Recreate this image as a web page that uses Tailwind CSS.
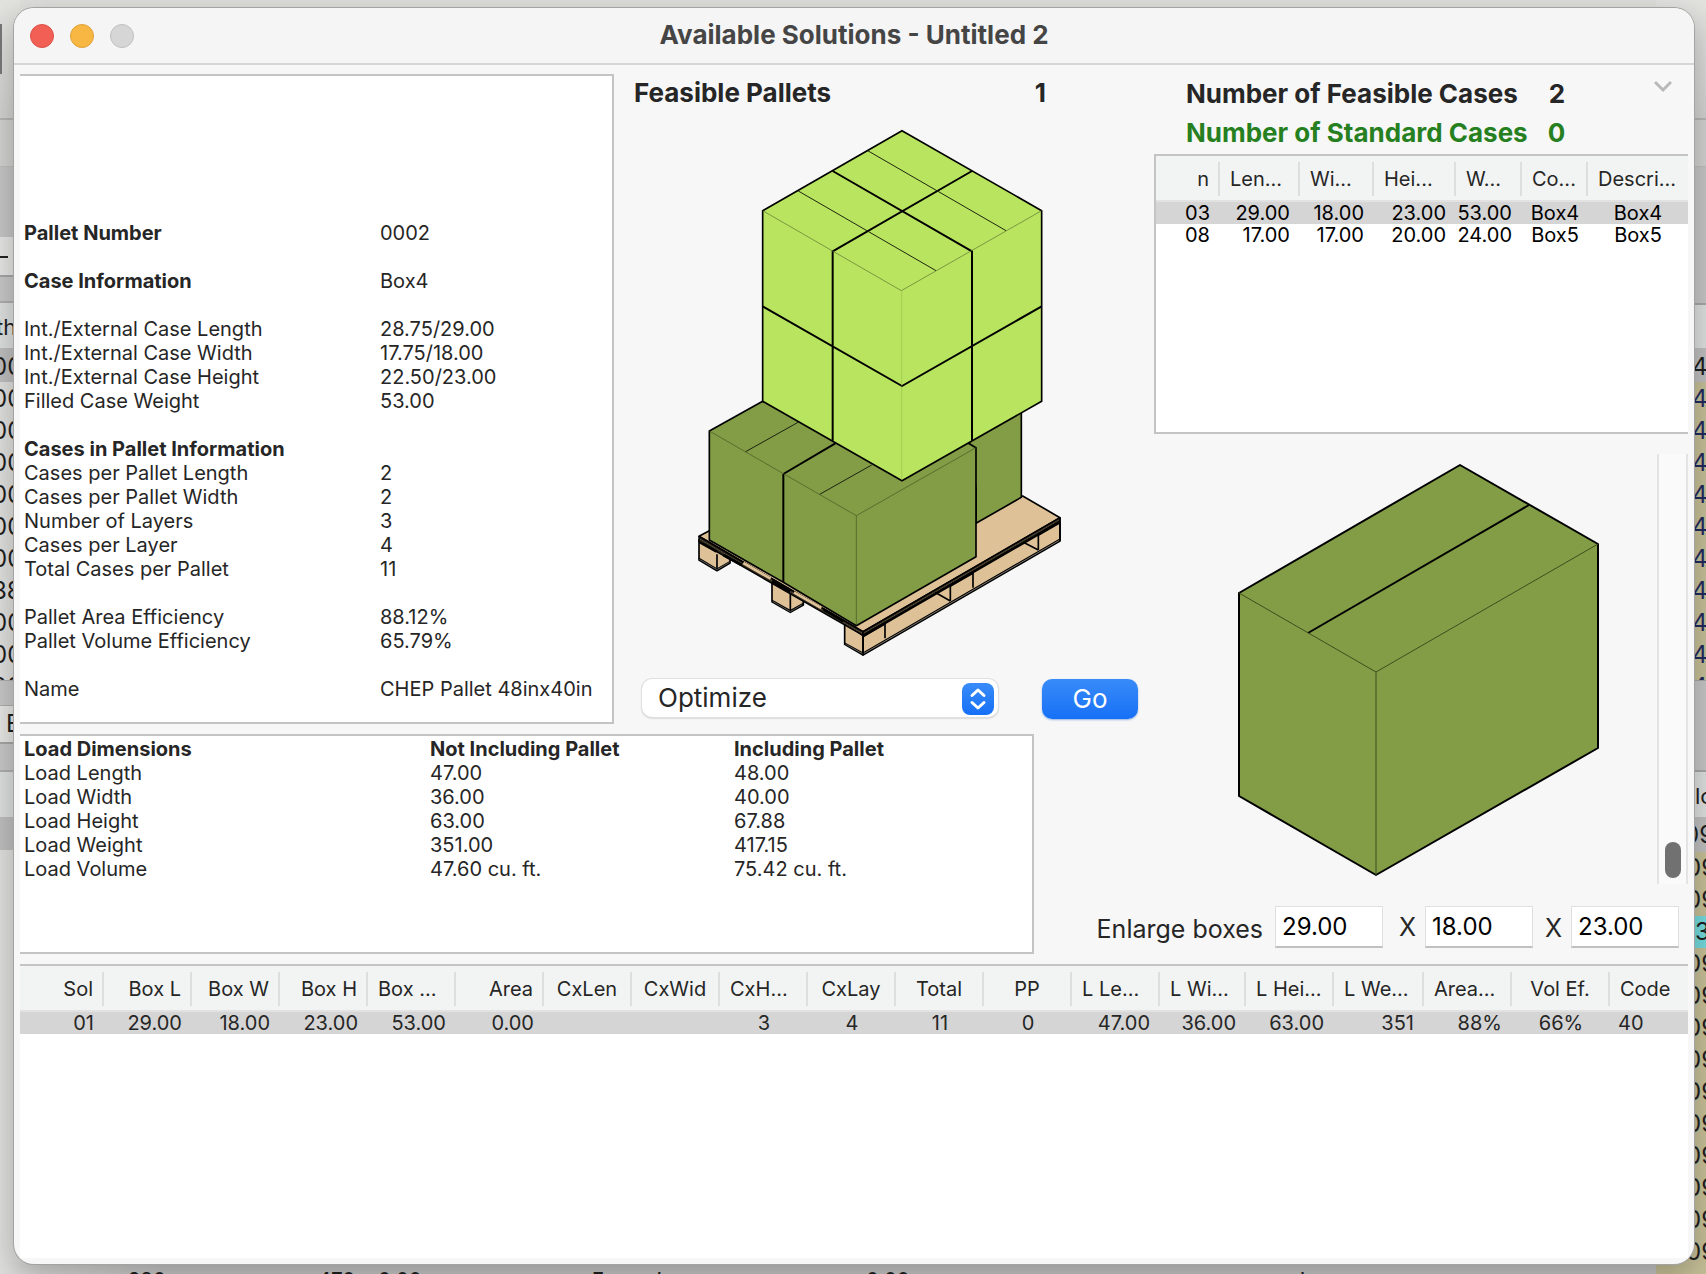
<!DOCTYPE html>
<html lang="en">
<head>
<meta charset="utf-8">
<title>Available Solutions - Untitled 2</title>
<script src="https://cdn.jsdelivr.net/npm/@tailwindcss/browser@4"></script>
</head>
<body class="relative h-screen overflow-hidden bg-[#dededb] font-[Inter,sans-serif] text-xl leading-6 text-[#262626]">

<!-- Windows behind the active one -->
<div class="absolute inset-0 flex justify-between overflow-hidden text-2xl leading-8 text-[#1f1f1f]" aria-hidden="true">
  <div class="flex w-5 shrink-0 flex-col overflow-hidden bg-[#dededc] whitespace-nowrap">
    <div class="h-[118px] shrink-0 bg-linear-to-b from-[#e2e2df] to-[#d0d0ce] pt-6"><div class="h-[50px] w-0.5 bg-[#777]"></div></div>
    <div class="h-12 shrink-0 border-t-2 border-[#b4b4b4] bg-[#d0d0cf]"></div>
    <div class="h-[71px] shrink-0 border-t border-[#bdbdbd] bg-[#c4c4c4]"></div>
    <div class="h-10 shrink-0 border-b-2 border-[#a5a5a5] bg-[#e4e4e3]"><div class="mt-[19px] h-0.5 w-2 bg-[#222]"></div></div>
    <div class="h-[26px] shrink-0 border-b-2 border-[#adadad] bg-[#c6c6c6]"></div>
    <div class="h-[45px] shrink-0 bg-[#dcdedd] pt-2 text-[22px]"><span class="-ml-1">th</span></div>
    <div class="h-[34px] shrink-0 bg-[#bdbdbd] pt-[3px]"><span class="-ml-2">00</span></div>
    <div class="flex h-[298px] shrink-0 flex-col overflow-hidden pt-px">
      <span class="-ml-2">00</span><span class="-ml-2">00</span><span class="-ml-2">00</span><span class="-ml-2">00</span><span class="-ml-2">00</span><span class="-ml-2">00</span><span class="-ml-2">88</span><span class="-ml-2">00</span><span class="-ml-2">00</span><span class="-ml-2">20</span>
    </div>
    <div class="h-[26px] shrink-0 border-y border-[#adadad] bg-[#c6c6c6]"></div>
    <div class="h-[38px] shrink-0 border-b-2 border-[#a5a5a5] bg-[#e4e4e3] pt-0.5 pl-1.5">E</div>
    <div class="h-[28px] shrink-0 border-b-2 border-[#adadad] bg-[#c6c6c6]"></div>
    <div class="h-[45px] shrink-0 bg-[#dcdedd]"></div>
    <div class="h-[33px] shrink-0 bg-[#bdbdbd]"></div>
  </div>
  <div class="flex w-[50px] shrink-0 flex-col overflow-hidden bg-[#c4be96] pl-[38px] whitespace-nowrap">
    <div class="-ml-10 h-[118px] shrink-0 bg-linear-to-b from-[#e2e2df] to-[#d0d0ce]"></div>
    <div class="-ml-10 h-12 shrink-0 border-t-2 border-[#b4b4b4] bg-[#d0d0cf]"></div>
    <div class="-ml-10 h-[137px] shrink-0 border-t border-[#bdbdbd] bg-[#c4c4c4]"></div>
    <div class="-ml-10 h-[45px] shrink-0 border-t-2 border-[#a5a5a5] bg-[#dcdedd]"></div>
    <div class="-ml-10 h-[34px] shrink-0 bg-[#bdbdbd] pt-[3px] pl-[38px]">4</div>
    <div class="flex h-[298px] shrink-0 flex-col overflow-hidden pt-px text-[#232a5c]">
      <span class="-ml-0.5">4</span><span class="-ml-0.5">4</span><span class="-ml-0.5">4</span><span class="-ml-0.5">4</span><span class="-ml-0.5">4</span><span class="-ml-0.5">4</span><span class="-ml-0.5">4</span><span class="-ml-0.5">4</span><span class="-ml-0.5">4</span><span class="-ml-0.5">4</span>
    </div>
    <div class="-ml-10 h-[90px] shrink-0 border-t border-[#a5a5a5] bg-[#c4c4c4]"></div>
    <div class="-ml-10 h-[47px] shrink-0 border-t-2 border-[#a5a5a5] bg-[#dcdedd] pt-2 pl-[41px] text-[22px]">load</div>
    <div class="-ml-10 h-[35px] shrink-0 bg-[#bdbdbd] pt-0.5 pl-[30px]">09</div>
    <span class="-ml-2">09</span><span class="-ml-2">09</span>
    <span class="-ml-10 bg-[#72d8da] pl-[41px]">3</span>
    <span class="-ml-2">09</span><span class="-ml-2">09</span><span class="-ml-2">09</span><span class="-ml-2">09</span><span class="-ml-2">09</span><span class="-ml-2">09</span><span class="-ml-2">09</span><span class="-ml-2">09</span><span class="-ml-2">09</span><span class="-ml-2">09</span>
  </div>
</div>
<div class="absolute bottom-0 left-0 flex h-3 w-[1656px] overflow-hidden bg-linear-to-r from-[#dededc] to-[#c4c4c4] to-10% pl-32 leading-7 font-medium text-[#1f1f1f]" aria-hidden="true">
  <span class="mt-1 w-[190px]">280</span><span class="mt-1 w-[60px]">470</span><span class="mt-1 w-[214px]">0.00</span><span class="mt-1 w-[274px]">Example</span><span class="mt-1 w-[434px]">0.00</span><span class="mt-1">l</span>
</div>

<!-- Active window -->
<main class="absolute top-2 right-3 bottom-2.5 left-3.5 flex flex-col overflow-hidden rounded-[20px] bg-[#f7f7f7] shadow-[0_0_0_1px_#a3a3a3,0_10px_30px_rgba(0,0,0,0.25)]">
  <header class="relative flex h-[57px] shrink-0 items-center border-b-2 border-[#d6d6d6] bg-[#f5f5f5]">
    <div class="absolute flex gap-4 pl-4">
      <button type="button" aria-label="Close" class="size-6 rounded-full border border-[#db5147] bg-[#f25f54]"></button>
      <button type="button" aria-label="Minimize" class="size-6 rounded-full border border-[#dea03a] bg-[#f8b642]"></button>
      <button type="button" aria-label="Zoom" class="size-6 rounded-full border border-[#bfbfbf] bg-[#d6d6d6]"></button>
    </div>
    <h1 class="flex-1 pb-0.5 text-center text-[26px] leading-8 font-bold text-[#454545]">Available Solutions - Untitled 2</h1>
  </header>

  <div class="flex shrink-0 pt-[9px] pl-1.5">
    <div class="min-w-0 flex-1">
      <div class="flex">
        <section class="h-[650px] w-[594px] shrink-0 border-2 border-l-0 border-[#c4c4c4] bg-white pt-[145px] pl-1">
          <dl class="grid auto-rows-[24px] grid-cols-[356px_1fr] whitespace-nowrap">
            <dt class="font-bold">Pallet Number</dt><dd>0002</dd>
            <dt class="col-span-2"></dt>
            <dt class="font-bold">Case Information</dt><dd>Box4</dd>
            <dt class="col-span-2"></dt>
            <dt>Int./External Case Length</dt><dd>28.75/29.00</dd>
            <dt>Int./External Case Width</dt><dd>17.75/18.00</dd>
            <dt>Int./External Case Height</dt><dd>22.50/23.00</dd>
            <dt>Filled Case Weight</dt><dd>53.00</dd>
            <dt class="col-span-2"></dt>
            <dt class="col-span-2 font-bold">Cases in Pallet Information</dt>
            <dt>Cases per Pallet Length</dt><dd>2</dd>
            <dt>Cases per Pallet Width</dt><dd>2</dd>
            <dt>Number of Layers</dt><dd>3</dd>
            <dt>Cases per Layer</dt><dd>4</dd>
            <dt>Total Cases per Pallet</dt><dd>11</dd>
            <dt class="col-span-2"></dt>
            <dt>Pallet Area Efficiency</dt><dd>88.12%</dd>
            <dt>Pallet Volume Efficiency</dt><dd>65.79%</dd>
            <dt class="col-span-2"></dt>
            <dt>Name</dt><dd>CHEP Pallet 48inx40in</dd>
          </dl>
        </section>

        <section class="flex flex-1 flex-col pl-5">
          <h2 class="flex w-[412px] justify-between text-[26px] leading-[38px] font-bold"><span>Feasible Pallets</span><span>1</span></h2>
          <svg class="mt-3.5 ml-14 h-[533px] w-[380px]" viewBox="30 51 1140 1599" fill="none" stroke="#000" stroke-width="5" stroke-linejoin="round" role="img" aria-label="Pallet load">
            <g transform="translate(0 840)">
              <g fill="#dec197">
                <path d="M57 452V513L111 545L150 522V490ZM111 496V543"/>
                <path d="M276 580V638L331 670L370 648V620ZM331 610V668"/>
                <path d="M549 742V798L1140 456V400Z"/>
                <path d="M494 700V766L549 798V740Z"/>
                <path d="M57 442L88 425L1028 321L1140 386L549 728Z"/>
              </g>
              <path fill="#2a2419" stroke-width="4" d="M57 442L549 728L1140 386V397L549 739L57 458Z"/>
              <path stroke="#7d6f59" stroke-width="2" stroke-dasharray="4 2" d="M60 451L549 734L1138 392"/>
              <path d="M57 508L111 540L150 518M276 634L331 665L370 643M494 762L549 792L1140 450" stroke-width="4"/>
              <path stroke="#777" stroke-width="2" d="M58 511L111 542L148 520M278 637L331 668L366 647M496 765L549 795L1140 453"/>
              <path d="M549 728V798M615 700V748M811 590V636M879 550V596M1075 436V483M1140 386V456M765 610L811 636M1030 460L1075 483"/>
              <path stroke-width="8" d="M549 741L615 703M811 590L879 551M1075 437L1140 399M276 577L331 608M431 662L490 696M60 460L110 488M130 498L185 528"/>
              <g fill="#829d46">
                <path d="M860 100L1024 10V325L888 403V300Z"/>
                <path d="M88 126L248 37L864 162L888 176V503L529 710L310 580L88 453Z"/>
              </g>
              <path stroke="#dec197" stroke-width="8" d="M190 522L272 569M342 610L424 657"/>
              <path d="M310 255V580M310 255L466 163" stroke-width="6"/>
              <path d="M197 188L354 100M419 316L575 228" stroke-width="3" stroke="#1c2210"/>
              <path d="M88 126L529 380L888 176M529 380V708" stroke-width="2" stroke="#46561f"/>
            </g>
            <path fill="#b8e45f" d="M666 65L1085 305V877L666 1115L248 877V305Z"/>
            <path stroke-width="6" d="M458 186L876 427V995M876 186L458 427V995M248 592L666 831L1085 592"/>
            <path stroke-width="3" stroke="#1e260f" d="M563 125L978 365M355 246L768 485"/>
            <path stroke-width="2" stroke="#5b7231" d="M248 305L664 545L1085 305"/>
            <path stroke-width="2" stroke="#9cc44f" d="M665 547V830M665 836V1112"/>
          </svg>
          <div class="mt-5 ml-2 flex">
            <div class="relative">
              <select aria-label="Action" class="h-[38px] w-[356px] appearance-none rounded-[10px] bg-white px-4 text-[26px] leading-9 shadow-[0_0_0_1px_#e0e0e0,0_1px_2px_rgba(0,0,0,0.35)]"><option>Optimize</option></select>
              <svg class="pointer-events-none absolute top-1 right-1 size-8 rounded-lg bg-linear-to-b from-[#388bf8] to-[#1670f6]" viewBox="0 0 32 32" fill="none" stroke="#fff" stroke-width="3" stroke-linecap="round" stroke-linejoin="round"><path d="M10 12.5L16 7L22 12.5M10 19.5L16 25L22 19.5"/></svg>
            </div>
            <button type="button" class="ml-11 h-10 w-24 rounded-[10px] bg-linear-to-b from-[#388bf8] to-[#1670f6] text-[26px] leading-10 text-white shadow-[0_1px_2px_rgba(0,80,200,0.4)]">Go</button>
          </div>
        </section>
      </div>

      <section class="mt-2.5 h-[220px] w-[1014px] border-2 border-l-0 border-[#c4c4c4] bg-white pt-px pl-1">
        <table class="w-full table-fixed text-left">
          <colgroup><col class="w-[406px]"><col class="w-[304px]"><col></colgroup>
          <thead><tr class="*:font-bold"><th>Load Dimensions</th><th>Not Including Pallet</th><th>Including Pallet</th></tr></thead>
          <tbody>
            <tr><td>Load Length</td><td>47.00</td><td>48.00</td></tr>
            <tr><td>Load Width</td><td>36.00</td><td>40.00</td></tr>
            <tr><td>Load Height</td><td>63.00</td><td>67.88</td></tr>
            <tr><td>Load Weight</td><td>351.00</td><td>417.15</td></tr>
            <tr><td>Load Volume</td><td>47.60 cu. ft.</td><td>75.42 cu. ft.</td></tr>
          </tbody>
        </table>
      </section>
    </div>

    <div class="w-[540px] shrink-0 pr-1.5">
      <div class="flex justify-between">
        <dl class="grid grid-cols-[1fr_auto] gap-x-5 pb-0.5 pl-8 text-[26px] leading-[39px] font-bold whitespace-nowrap">
          <dt>Number of Feasible Cases</dt><dd class="text-right">2</dd>
          <dt class="text-[#26801f]">Number of Standard Cases</dt><dd class="text-right text-[#26801f]">0</dd>
        </dl>
        <svg class="mt-[5px] mr-4 h-5 w-[18px]" viewBox="0 0 18 20" fill="none" stroke="#b9b9b9" stroke-width="3"><path d="M1 3L9 11L17 3"/></svg>
      </div>
      <div class="h-[280px] border-2 border-r-0 border-[#c4c4c4] bg-white">
        <table class="w-full table-fixed text-right whitespace-nowrap text-black">
          <colgroup><col class="w-16"><col class="w-20"><col class="w-[74px]"><col class="w-[82px]"><col class="w-[66px]"><col class="w-[66px]"><col></colgroup>
          <thead class="border-b-2 border-[#e2e2e2] bg-[#f2f4f3] text-[#262626]">
            <tr class="*:pt-1.5 *:pb-1 *:font-normal">
              <th><div class="h-[34px] border-r-2 border-[#dedede] pr-[9px] text-right leading-[34px]">n</div></th>
              <th><div class="h-[34px] border-r-2 border-[#dedede] pl-2.5 text-left leading-[34px]">Len...</div></th>
              <th><div class="h-[34px] border-r-2 border-[#dedede] pl-2.5 text-left leading-[34px]">Wi...</div></th>
              <th><div class="h-[34px] border-r-2 border-[#dedede] pl-2.5 text-left leading-[34px]">Hei...</div></th>
              <th><div class="h-[34px] border-r-2 border-[#dedede] pl-2.5 text-left leading-[34px]">W...</div></th>
              <th><div class="h-[34px] border-r-2 border-[#dedede] pl-2.5 text-left leading-[34px]">Co...</div></th>
              <th><div class="h-[34px] pl-2.5 text-left leading-[34px]">Descri...</div></th>
            </tr>
          </thead>
          <tbody class="leading-[22px]">
            <tr class="bg-[#d5d5d5]"><td class="pr-2.5">03</td><td class="pr-2.5">29.00</td><td class="pr-2.5">18.00</td><td class="pr-2.5">23.00</td><td class="pr-2.5">53.00</td><td class="text-center">Box4</td><td class="text-center">Box4</td></tr>
            <tr><td class="pr-2.5">08</td><td class="pr-2.5">17.00</td><td class="pr-2.5">17.00</td><td class="pr-2.5">20.00</td><td class="pr-2.5">24.00</td><td class="text-center">Box5</td><td class="text-center">Box5</td></tr>
          </tbody>
        </table>
      </div>
      <div class="mt-5 flex h-[430px] justify-between">
        <svg class="mt-2 ml-[82px] h-[416px] w-[364px]" viewBox="1236 461 364 416" fill="none" stroke="#000" stroke-width="2" stroke-linejoin="round" role="img" aria-label="Case">
          <path fill="#829d46" d="M1460 464L1598 543V747L1376 874L1239 795V592Z"/>
          <path d="M1308 632L1529 504"/>
          <path stroke="#3f4d1f" stroke-width="1" d="M1239 592L1376 671L1598 543M1376 671V874"/>
        </svg>
        <div class="flex w-[31px] items-end justify-center border-x-2 border-[#e4e4e4] bg-[#fafafa] pb-1.5"><div class="h-9 w-4 rounded-full bg-[#717171]"></div></div>
      </div>
      <form class="mt-[22px] -ml-16 flex h-[42px] items-center justify-end pr-[9px] text-[25px] leading-8 whitespace-nowrap">
        <label for="len" class="mr-3 pt-1">Enlarge boxes</label>
        <input id="len" value="29.00" class="h-[42px] w-[108px] border border-b-2 border-[#e0e0e0] border-b-[#c0c0c0] bg-white pl-1.5 text-2xl text-black">
        <label for="wid" class="w-[42px] pl-4">X</label>
        <input id="wid" value="18.00" class="h-[42px] w-[108px] border border-b-2 border-[#e0e0e0] border-b-[#c0c0c0] bg-white pl-1.5 text-2xl text-black">
        <label for="hei" class="w-[38px] pt-0.5 pl-3">X</label>
        <input id="hei" value="23.00" class="h-[42px] w-[108px] border border-b-2 border-[#e0e0e0] border-b-[#c0c0c0] bg-white pl-1.5 text-2xl text-black">
      </form>
    </div>
  </div>

  <section class="mx-1.5 mt-2.5 mb-1.5 flex-1 border-t-2 border-[#c4c4c4] bg-white">
    <table class="w-full table-fixed text-right whitespace-nowrap">
      <colgroup><col class="w-[84px]"><col class="w-[88px]" span="12"><col class="w-[86px]"><col class="w-[88px]"><col class="w-[90px]"><col class="w-[88px]"><col class="w-[98px]"><col></colgroup>
      <thead class="border-b-2 border-[#e2e2e2] bg-[#f2f4f3]">
        <tr class="*:pt-1.5 *:pb-1 *:font-normal">
          <th><div class="h-[34px] border-r-2 border-[#dedede] pr-[9px] text-right leading-[34px]">Sol</div></th>
          <th><div class="h-[34px] border-r-2 border-[#dedede] pr-[9px] text-right leading-[34px]">Box L</div></th>
          <th><div class="h-[34px] border-r-2 border-[#dedede] pr-[9px] text-right leading-[34px]">Box W</div></th>
          <th><div class="h-[34px] border-r-2 border-[#dedede] pr-[9px] text-right leading-[34px]">Box H</div></th>
          <th><div class="h-[34px] border-r-2 border-[#dedede] pl-2.5 text-left leading-[34px]">Box ...</div></th>
          <th><div class="h-[34px] border-r-2 border-[#dedede] pr-[9px] text-right leading-[34px]">Area</div></th>
          <th><div class="h-[34px] border-r-2 border-[#dedede] text-center leading-[34px]">CxLen</div></th>
          <th><div class="h-[34px] border-r-2 border-[#dedede] text-center leading-[34px]">CxWid</div></th>
          <th><div class="h-[34px] border-r-2 border-[#dedede] pl-2.5 text-left leading-[34px]">CxH...</div></th>
          <th><div class="h-[34px] border-r-2 border-[#dedede] text-center leading-[34px]">CxLay</div></th>
          <th><div class="h-[34px] border-r-2 border-[#dedede] text-center leading-[34px]">Total</div></th>
          <th><div class="h-[34px] border-r-2 border-[#dedede] text-center leading-[34px]">PP</div></th>
          <th><div class="h-[34px] border-r-2 border-[#dedede] pl-2.5 text-left leading-[34px]">L Le...</div></th>
          <th><div class="h-[34px] border-r-2 border-[#dedede] pl-2.5 text-left leading-[34px]">L Wi...</div></th>
          <th><div class="h-[34px] border-r-2 border-[#dedede] pl-2.5 text-left leading-[34px]">L Hei...</div></th>
          <th><div class="h-[34px] border-r-2 border-[#dedede] pl-2.5 text-left leading-[34px]">L We...</div></th>
          <th><div class="h-[34px] border-r-2 border-[#dedede] pl-2.5 text-left leading-[34px]">Area...</div></th>
          <th><div class="h-[34px] border-r-2 border-[#dedede] text-center leading-[34px]">Vol Ef.</div></th>
          <th><div class="h-[34px] pl-2.5 text-left leading-[34px]">Code</div></th>
        </tr>
      </thead>
      <tbody class="leading-[22px]">
        <tr class="bg-[#d5d5d5]">
          <td class="pr-2.5">01</td><td class="pr-2.5">29.00</td><td class="pr-2.5">18.00</td><td class="pr-2.5">23.00</td><td class="pr-2.5">53.00</td><td class="pr-2.5">0.00</td><td></td><td></td><td class="text-center">3</td><td class="text-center">4</td><td class="text-center">11</td><td class="text-center">0</td><td class="pr-2.5">47.00</td><td class="pr-2.5">36.00</td><td class="pr-2.5">63.00</td><td class="pr-2.5">351</td><td class="pr-2.5">88%</td><td class="text-center">66%</td><td class="pl-2 text-left">40</td>
        </tr>
      </tbody>
    </table>
  </section>
</main>
</body>
</html>
